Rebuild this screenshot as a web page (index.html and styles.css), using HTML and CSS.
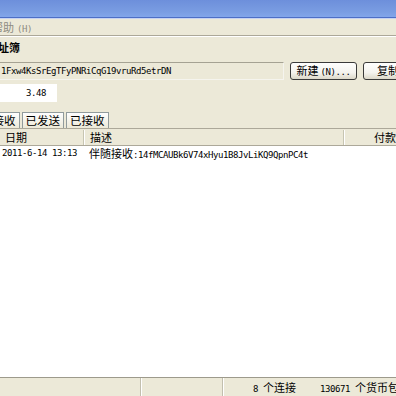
FILE: index.html
```
<html>
  <head>
    <meta charset="utf-8"/>
    <link rel="stylesheet" href="styles.css">
  </head>
  <body>
    <div class="window">
      <div class="titlebar"></div>

      <div class="menubar">
        <span class="menu-item">帮助<span class="mono">(H)</span></span>
      </div>

      <div class="content">
        <div class="heading">地址簿</div>

        <div class="addr-row">
          <div class="field addr mono">1Fxw4KsSrEgTFyPNRiCqG19vruRd5etrDN</div>
          <button class="btn">新建<span class="mono">(N)...</span></button>
          <button class="btn">复制<span class="mono">...</span></button>
        </div>

        <div class="balance mono">3.48</div>

        <div class="tabs">
          <span class="tab">发送/接收</span>
          <span class="tab">已发送</span>
          <span class="tab">已接收</span>
        </div>

        <div class="list">
          <div class="list-head">
            <div class="col col-date">日期</div>
            <div class="col col-desc">描述</div>
            <div class="col col-pay">付款</div>
          </div>
          <div class="list-row">
            <div class="col col-date mono">2011-6-14 13:13</div>
            <div class="col col-desc">伴随接收<span class="mono">:14fMCAUBk6V74xHyu1B8JvLiKQ9QpnPC4t</span></div>
            <div class="col col-pay"></div>
          </div>
        </div>
      </div>

      <div class="statusbar">
        <div class="status-cell cell-1"></div>
        <div class="status-cell cell-2"></div>
        <div class="status-cell cell-3"><span class="mono">8 </span>个连接</div>
        <div class="status-cell cell-4"><span class="mono">130671 </span>个货币包</div>
      </div>
    </div>
  </body>
</html>
```

FILE: styles.css
```
body {
  margin: 0;
  overflow: hidden;
  font-family: "Noto Sans CJK SC", sans-serif;
  font-size: 11px;
  color: #000;
}

.mono {
  font-family: "DejaVu Sans Mono", monospace;
  font-size: 9px;
  letter-spacing: -0.42px;
}

.window {
  display: flex;
  flex-direction: column;
  width: 396px;
  height: 396px;
  background: #ece9d8;
  overflow: hidden;
}

.titlebar {
  height: 17px;
  flex: none;
  background: linear-gradient(#6d8fdb, #7a9de2 70%, #82a6ea);
  border-bottom: 1px solid #4d6fc6;
}

.menubar {
  height: 16px;
  flex: none;
  display: flex;
  align-items: center;
  border-top: 1px solid #c8d3f0;
  border-bottom: 1px solid #aca899;
  box-shadow: 0 1px 0 #fff;
}

.menu-item {
  margin-left: -8px;
  color: #8d8b80;
  white-space: nowrap;
}

.menu-item .mono {
  margin-left: 3px;
}

.content {
  flex: 1;
  display: flex;
  flex-direction: column;
  min-height: 0;
  padding-top: 3px;
}

.heading {
  margin-left: -13px;
  font-weight: bold;
  height: 17px;
  line-height: 17px;
  white-space: nowrap;
}

.addr-row {
  display: flex;
  align-items: center;
  gap: 6px;
  margin-top: 6px;
  height: 18px;
  white-space: nowrap;
}

.field.addr {
  width: 290px;
  height: 18px;
  margin-left: -6px;
  box-sizing: border-box;
  padding-left: 6px;
  line-height: 16px;
  border: 1px solid #a5a293;
  border-right-color: #f5f4ee;
  border-bottom-color: #f5f4ee;
  background: #ece9d8;
  flex: none;
}

.btn {
  flex: none;
  height: 18px;
  width: 67px;
  padding: 0;
  margin: 0;
  font-family: "Noto Sans CJK SC", sans-serif;
  font-size: 11px;
  line-height: 14px;
  border: 1px solid #3a3a3a;
  border-radius: 3px;
  background: linear-gradient(#fefefd, #f4f3ee 60%, #dcd8c9);
  color: #000;
}

.btn .mono {
  margin-left: 2px;
}

.balance {
  margin-top: 4px;
  width: 57px;
  height: 18px;
  line-height: 18px;
  background: #fff;
  box-sizing: border-box;
  padding-left: 26px;
}

.tabs {
  display: flex;
  gap: 2px;
  margin-top: 10px;
  margin-left: -39px;
  height: 16px;
  border-bottom: 1px solid #aca899;
  white-space: nowrap;
}

.tab {
  height: 15px;
  line-height: 15px;
  padding: 0 3px;
  font-size: 11.5px;
  border: 1px solid #919b9c;
  border-bottom: none;
  background: linear-gradient(#fefefe, #ece9d8);
}

.list {
  flex: 1;
  display: flex;
  flex-direction: column;
  background: #fff;
  margin-top: 1px;
  border-bottom: 1px solid #9d9a8c;
}

.list-head {
  display: flex;
  height: 15px;
  line-height: 15px;
  background: #ece9d8;
  border-bottom: 1px solid #aca899;
}

.list-head .col {
  border-right: 1px solid #c7c5b2;
  box-shadow: 1px 0 0 #fff;
}

.list-row {
  display: flex;
  height: 15px;
  line-height: 15px;
  white-space: nowrap;
}

.col {
  flex: none;
  overflow: hidden;
  white-space: nowrap;
}

.col-date {
  width: 81px;
  padding-left: 2px;
}

.list-head .col-date {
  padding-left: 5px;
  width: 78px;
}

.col-desc {
  width: 253px;
  padding-left: 6px;
}

.col-pay {
  flex: 1;
  text-align: right;
}

.list-head .col-pay {
  border-right: none;
  box-shadow: none;
}

.statusbar {
  flex: none;
  display: flex;
  height: 18px;
  line-height: 18px;
  white-space: nowrap;
}

.status-cell {
  flex: none;
  overflow: hidden;
  border-right: 1px solid #c2bfae;
  box-shadow: 1px 0 0 #fff;
}

.cell-1 {
  width: 140px;
}

.cell-2 {
  width: 81px;
}

.cell-3 {
  width: 66px;
  padding-left: 30px;
  border-right: none;
  box-shadow: none;
}

.cell-4 {
  flex: 1;
  padding-left: 1px;
  border-right: none;
  box-shadow: none;
}
```
